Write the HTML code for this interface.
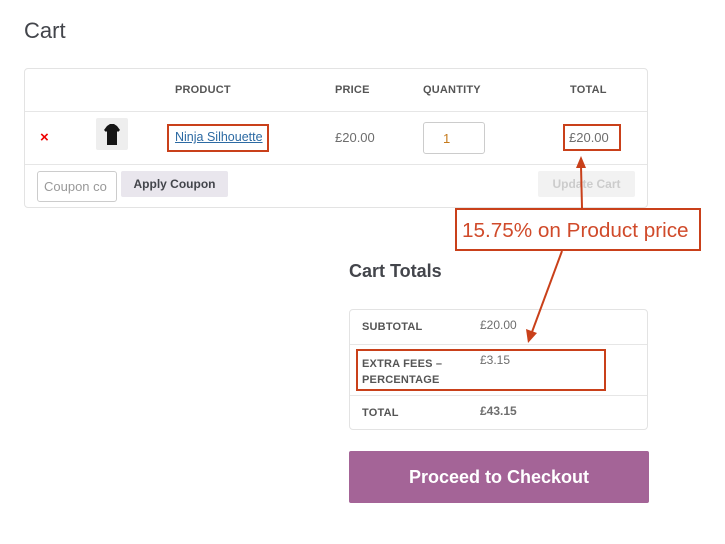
<!DOCTYPE html>
<html><head><style>
body{margin:0;width:725px;height:544px;background:#fff;font-family:"Liberation Sans",sans-serif;position:relative;overflow:hidden;color:#43454b}
.a{position:absolute}
.h{font-size:11px;font-weight:bold;color:#555;letter-spacing:.2px}
.g{font-size:13px;color:#6d6d6d}
.red{border:2px solid #c9401a;box-sizing:border-box}
</style></head><body>
<div class="a" style="left:24px;top:18px;font-size:22px;color:#43454b">Cart</div>
<div class="a" style="left:24px;top:68px;width:624px;height:140px;border:1px solid #e3e3e3;border-radius:4px;box-sizing:border-box"></div>
<div class="a" style="left:25px;top:111px;width:622px;border-top:1px solid #e6e6e6"></div>
<div class="a" style="left:25px;top:164px;width:622px;border-top:1px solid #e6e6e6"></div>
<div class="a h" style="left:175px;top:84px">PRODUCT</div>
<div class="a h" style="left:335px;top:84px">PRICE</div>
<div class="a h" style="left:423px;top:84px">QUANTITY</div>
<div class="a h" style="left:570px;top:84px">TOTAL</div>
<div class="a" style="left:40px;top:129px;color:#e00;font-size:15px;font-weight:bold">×</div>
<div class="a" style="left:96px;top:118px;width:32px;height:32px;background:#eee;border-radius:2px"></div>
<svg class="a" style="left:96px;top:118px" width="32" height="32"><path d="M11 8 L14 6 L18 6 L21 8 L24 12 L22 14 L21 13 L21 27 L11 27 L11 13 L10 14 L8 12 Z" fill="#151515"/></svg>
<div class="a red" style="left:167px;top:124px;width:102px;height:28px"></div>
<div class="a" style="left:175px;top:130px;font-size:12.5px;color:#2c6aa3;text-decoration:underline">Ninja Silhouette</div>
<div class="a g" style="left:335px;top:130px">£20.00</div>
<div class="a" style="left:423px;top:122px;width:62px;height:32px;border:1px solid #ccc;border-radius:3px;box-sizing:border-box"></div>
<div class="a" style="left:443px;top:131px;font-size:13px;color:#c57a1c">1</div>
<div class="a red" style="left:563px;top:124px;width:58px;height:27px"></div>
<div class="a g" style="left:569px;top:130px">£20.00</div>
<div class="a" style="left:37px;top:171px;width:80px;height:31px;border:1px solid #ccc;border-radius:3px;box-sizing:border-box"></div>
<div class="a" style="left:44px;top:179px;font-size:13px;color:#999;width:70px;overflow:hidden;white-space:nowrap">Coupon co</div>
<div class="a" style="left:121px;top:171px;width:107px;height:26px;background:#e9e6ed;border-radius:2px;font-size:12px;font-weight:bold;color:#43454b;text-align:center;line-height:26px">Apply Coupon</div>
<div class="a" style="left:538px;top:171px;width:97px;height:26px;background:#f2f2f2;border-radius:2px;font-size:12px;font-weight:bold;color:#ccc;text-align:center;line-height:26px">Update Cart</div>
<div class="a" style="left:349px;top:261px;font-size:18px;font-weight:bold;color:#43454b">Cart Totals</div>
<div class="a" style="left:349px;top:309px;width:299px;height:121px;border:1px solid #e3e3e3;border-radius:4px;box-sizing:border-box"></div>
<div class="a" style="left:350px;top:344px;width:297px;border-top:1px solid #e6e6e6"></div>
<div class="a" style="left:350px;top:395px;width:297px;border-top:1px solid #e6e6e6"></div>
<div class="a h" style="left:362px;top:321px">SUBTOTAL</div>
<div class="a g" style="left:480px;top:318px;font-size:12px">£20.00</div>
<div class="a red" style="left:356px;top:349px;width:250px;height:42px"></div>
<div class="a h" style="left:362px;top:356px;line-height:16px">EXTRA FEES –<br>PERCENTAGE</div>
<div class="a g" style="left:480px;top:353px;font-size:12px">£3.15</div>
<div class="a h" style="left:362px;top:407px">TOTAL</div>
<div class="a" style="left:480px;top:404px;font-size:12px;font-weight:bold;color:#6d6d6d">£43.15</div>
<div class="a" style="left:349px;top:451px;width:300px;height:52px;background:#a46497;border-radius:2px;color:#fff;font-size:18px;font-weight:bold;text-align:center;line-height:52px">Proceed to Checkout</div>
<svg class="a" style="left:0;top:0" width="725" height="544">
<line x1="582" y1="208" x2="581" y2="166" stroke="#c9401a" stroke-width="2"/>
<polygon points="581,156 576,168 586,168" fill="#c9401a"/>
<line x1="562" y1="251" x2="532" y2="332" stroke="#c9401a" stroke-width="2"/>
<polygon points="528,343 526,329 537,333" fill="#c9401a"/>
</svg>
<div class="a red" style="left:455px;top:208px;width:246px;height:43px;background:#fff"></div>
<div class="a" style="left:462px;top:219px;font-size:20.7px;color:#d04a2a">15.75% on Product price</div>
</body></html>
